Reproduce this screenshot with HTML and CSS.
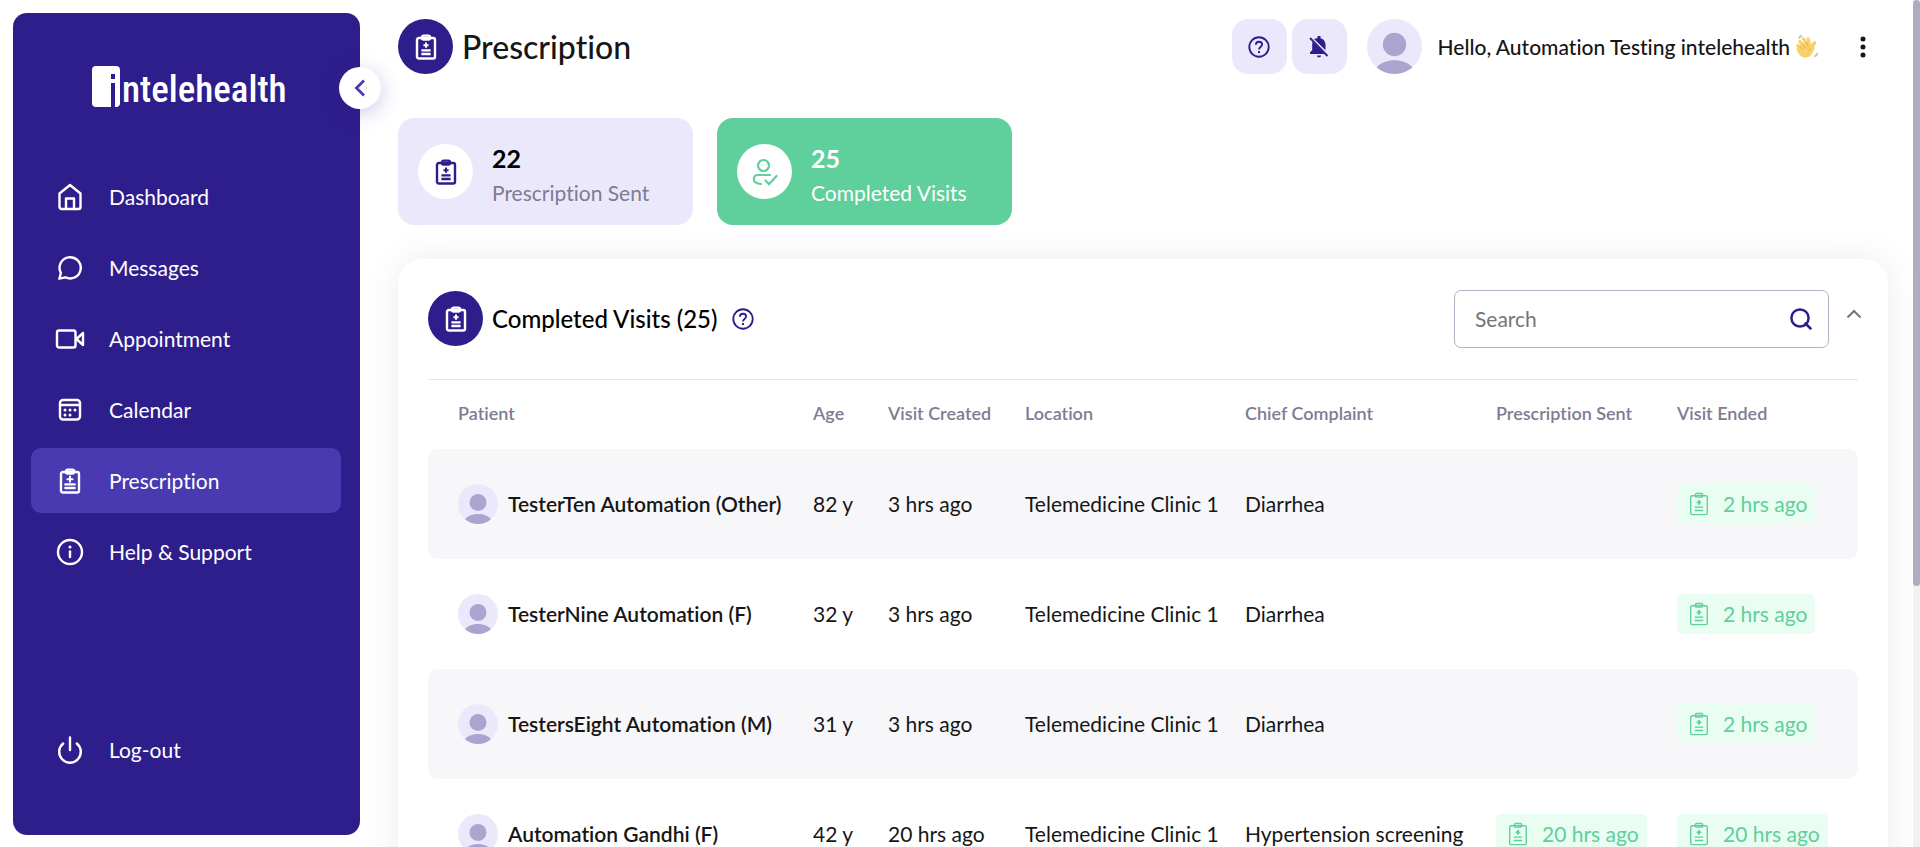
FILE: index.html
```html
<!DOCTYPE html>
<html lang="en">
<head>
<meta charset="utf-8">
<meta name="viewport" content="width=device-width, initial-scale=1">
<title>Prescription - Intelehealth</title>
<link rel="stylesheet" href="styles.css">
</head>
<body>
<svg class="sprite" aria-hidden="true">
  <symbol id="clipboard" viewBox="0 0 24 26">
    <rect x="3" y="4" width="18" height="20.5" rx="1.8" fill="none" stroke="currentColor" stroke-width="var(--sw,2.4)"/>
    <rect class="clip" x="8" y="1.6" width="8" height="4" rx="1.6" stroke="currentColor" stroke-width="var(--sw,2.4)"/>
    <path d="M12 8.6v5.2M9.4 11.2h5.2" stroke="currentColor" stroke-width="2" fill="none"/>
    <path d="M7.4 16.4h9.2M7.4 20h9.2" stroke="currentColor" stroke-width="var(--sw,2.4)" fill="none"/>
  </symbol>
  <symbol id="help" viewBox="0 0 24 24">
    <circle cx="12" cy="12" r="10.6" fill="none" stroke="currentColor" stroke-width="2"/>
    <path d="M8.6 9.6c0-2 1.500-3.300 3.400-3.300s3.400 1.300 3.400 3.100c0 2.500-3.400 2.800-3.400 5.200" fill="none" stroke="currentColor" stroke-width="2"/>
    <rect x="10.9" y="16.4" width="2.200" height="2.200" fill="currentColor"/>
  </symbol>
  <symbol id="person" viewBox="0 0 40 40">
    <circle cx="20" cy="20" r="20" fill="#ece8fc"/>
    <circle cx="20" cy="18.500" r="8.500" fill="#aaa4cf"/>
    <path d="M7 35.200C10 31.500 15 30 20 30s10 1.500 13 5.200A20 20 0 0 1 7 35.200z" fill="#aaa4cf"/>
  </symbol>
</svg>
<div class="app">
  <aside class="sidebar">
    <a class="logo" href="#" aria-label="intelehealth">
      <svg viewBox="0 0 28 41" width="28" height="41" aria-hidden="true"><path fill="#fff" fill-rule="evenodd" d="M4 0h20a4 4 0 0 1 4 4v33a4 4 0 0 1-4 4h-1V17h-4v24H4a4 4 0 0 1-4-4V4a4 4 0 0 1 4-4zm15 8v5h4V8z"/></svg>
      <span>ntelehealth</span>
    </a>
    <button class="collapse" aria-label="Collapse menu"><svg width="12" height="18" viewBox="0 0 12 18"><path d="M10 1.500 2.500 9 10 16.500" fill="none" stroke="#493ab1" stroke-width="2.800"/></svg></button>
    <nav class="nav">
      <a href="#"><svg viewBox="0 0 30 30"><path d="M4.500 11.500 15 3l10.500 8.500V25a2 2 0 0 1-2 2h-17a2 2 0 0 1-2-2zM11 27V16.500h8V27"/></svg><span>Dashboard</span></a>
      <a href="#"><svg viewBox="0 0 30 30"><path d="M4.300 25.700 5.900 20a10.600 10.600 0 1 1 4.500 4.300z"/></svg><span>Messages</span></a>
      <a href="#"><svg viewBox="0 0 30 30"><rect x="2" y="6.500" width="18.500" height="17" rx="2"/><path d="m28 9-6.500 6 6.500 6z"/></svg><span>Appointment</span></a>
      <a href="#"><svg viewBox="0 0 30 30"><rect x="5" y="5" width="20" height="19.500" rx="3"/><path d="M5 10h20"/><path class="dots" d="M10 15h.01M15 15h.01M20 15h.01M10 20h.01M15 20h.01"/></svg><span>Calendar</span></a>
      <a class="active" href="#" aria-current="page"><svg class="rx"><use href="#clipboard"/></svg><span>Prescription</span></a>
      <a href="#"><svg viewBox="0 0 30 30"><circle cx="15" cy="15" r="12"/><path d="M15 14.500v5.500"/><path class="dots" d="M15 10h.01"/></svg><span>Help &amp; Support</span></a>
    </nav>
    <nav class="nav nav-end">
      <a href="#"><svg viewBox="0 0 30 30"><path d="M15 2.500v12.500M8.200 8.500a10.800 10.800 0 1 0 13.600 0"/></svg><span>Log-out</span></a>
    </nav>
  </aside>

  <main class="main">
    <header class="topbar">
      <span class="disc"><svg class="rx"><use href="#clipboard"/></svg></span>
      <h1>Prescription</h1>
      <div class="tools">
        <button class="tool" aria-label="Help"><svg width="22" height="22"><use href="#help"/></svg></button>
        <button class="tool" aria-label="Notifications off"><svg width="20" height="22" viewBox="0 0 20 22"><path fill="currentColor" d="M8.500 0h3v2.200c3 .7 5 3.200 5 6.600v5.500L5 2.900c.9-.4 2-.6 3.500-.7zM3.600 5.800 15.800 18H1v-1.700l2.200-2V8.800c0-1 .1-2.100.4-3zM8 19.500h4a2 2 0 0 1-4 0z"/><path d="m1 2 17.500 18" stroke="currentColor" stroke-width="1.800"/></svg></button>
      </div>
      <svg class="avatar" role="img" aria-label="Profile photo"><use href="#person"/></svg>
      <p class="hello"><span>Hello, Automation Testing intelehealth</span>
        <svg width="24" height="24" viewBox="0 0 24 24" aria-label="waving hand" role="img"><g stroke="#f7d26c" stroke-linecap="round" fill="none"><path stroke-width="3.200" d="M3.800 10.500 8 15M5.800 6.500l5 6.500M9.500 4l4 7.500M14 3.800l1.800 7"/><path stroke-width="3.600" d="M20.500 8c-2 1.500-2 4-2 6"/></g><path fill="#f7d26c" d="m2.500 12.500 12.500-6 4.500 4.500c1 5-1.500 10.500-7 11.500-5 .8-9.500-3.500-10-10z"/><path d="m5.500 11 3.500 4M8 8.500l4 5M11.800 6.500l2.700 5.500M17 14c-1.500 0-2.500 1-3 2.500" stroke="#e3ad45" fill="none"/><path d="M5 3.500C5.500 2 6.500 1 8 1M20.500 21.500c1.500-.5 2.500-1.500 2.500-3.500" stroke="#c3c3ca" stroke-width="2" fill="none"/></svg>
      </p>
      <button class="more" aria-label="More options"><svg width="6" height="22" viewBox="0 0 6 22"><path d="M3 3h.01M3 11h.01M3 19h.01" stroke="#161616" stroke-width="5" stroke-linecap="round"/></svg></button>
    </header>

    <section class="stats">
      <button class="stat">
        <span class="disc light"><svg class="rx"><use href="#clipboard"/></svg></span>
        <span class="stat-text"><b>22</b><span>Prescription Sent</span></span>
      </button>
      <button class="stat selected">
        <span class="disc light"><svg width="26" height="28" viewBox="0 0 26 28" fill="none" stroke="currentColor" stroke-width="2.200" stroke-linecap="round"><circle cx="11.500" cy="7.500" r="5.500"/><path d="M18 17H5.500C3.500 17 2 18.500 2 20.300V22c0 1.800 2.500 3.500 7 4M13.500 22.500l3.500 3.700 7.500-8.200"/></svg></span>
        <span class="stat-text"><b>25</b><span>Completed Visits</span></span>
      </button>
    </section>

    <section class="card">
      <div class="card-head">
        <span class="disc"><svg class="rx"><use href="#clipboard"/></svg></span>
        <h2>Completed Visits (25)</h2>
        <button class="plain" aria-label="About completed visits"><svg width="22" height="22"><use href="#help"/></svg></button>
        <form class="search">
          <input type="search" placeholder="Search" aria-label="Search">
          <button class="plain" type="button" aria-label="Run search"><svg width="22" height="22" viewBox="0 0 22 22" fill="none" stroke="currentColor" stroke-width="2.500"><circle cx="10" cy="10" r="8.600"/><path d="m15.500 15.500 5 5" stroke-linecap="round"/></svg></button>
        </form>
        <button class="plain fold" aria-label="Collapse section"><svg width="16" height="10" viewBox="0 0 16 10"><path d="m1.500 8.500 6.500-6.500 6.500 6.500" fill="none" stroke="currentColor" stroke-width="2"/></svg></button>
      </div>
      <table>
        <colgroup><col class="c-patient"><col class="c-age"><col class="c-created"><col class="c-location"><col class="c-complaint"><col class="c-sent"><col class="c-ended"></colgroup>
        <thead>
          <tr><th>Patient</th><th>Age</th><th>Visit Created</th><th>Location</th><th>Chief Complaint</th><th>Prescription Sent</th><th>Visit Ended</th></tr>
        </thead>
        <tbody>
          <tr><td><span class="patient"><svg><use href="#person"/></svg>TesterTen Automation (Other)</span></td><td>82 y</td><td>3 hrs ago</td><td>Telemedicine Clinic 1</td><td>Diarrhea</td><td></td><td><span class="badge"><svg><use href="#clipboard"/></svg>2 hrs ago</span></td></tr>
          <tr><td><span class="patient"><svg><use href="#person"/></svg>TesterNine Automation (F)</span></td><td>32 y</td><td>3 hrs ago</td><td>Telemedicine Clinic 1</td><td>Diarrhea</td><td></td><td><span class="badge"><svg><use href="#clipboard"/></svg>2 hrs ago</span></td></tr>
          <tr><td><span class="patient"><svg><use href="#person"/></svg>TestersEight Automation (M)</span></td><td>31 y</td><td>3 hrs ago</td><td>Telemedicine Clinic 1</td><td>Diarrhea</td><td></td><td><span class="badge"><svg><use href="#clipboard"/></svg>2 hrs ago</span></td></tr>
          <tr><td><span class="patient"><svg><use href="#person"/></svg>Automation Gandhi (F)</span></td><td>42 y</td><td>20 hrs ago</td><td>Telemedicine Clinic 1</td><td>Hypertension screening</td><td><span class="badge"><svg><use href="#clipboard"/></svg>20 hrs ago</span></td><td><span class="badge"><svg><use href="#clipboard"/></svg>20 hrs ago</span></td></tr>
        </tbody>
      </table>
    </section>
  </main>
</div>
<div class="scrollbar" aria-hidden="true"></div>
</body>
</html>
```
FILE: styles.css
```css
* { box-sizing: border-box; }
:root {
  --indigo: #2e1e8b;
  --lavender: #ece8fc;
  --green: #5fcf9b;
  --grey: #7f7b92;
}
body {
  margin: 0;
  height: 100vh;
  overflow: hidden;
  background: #fff;
  color: #161616;
  font-family: Lato, "Open Sans", sans-serif;
  font-size: 21px;
  line-height: 24px;
  font-variant-ligatures: none;
}
button, input { font: inherit; color: inherit; font-variant-ligatures: none; }
button { border: 0; padding: 0; background: none; cursor: pointer; display: flex; align-items: center; justify-content: center; }
h1, h2, p { margin: 0; }
svg { display: block; flex: none; }
.sprite { position: absolute; width: 0; height: 0; }
.clip { fill: none; }
.rx { width: 26px; height: 26px; }

.app { display: flex; height: 100%; }

/* Sidebar */
.sidebar {
  position: relative;
  flex: none;
  display: flex;
  flex-direction: column;
  width: 347px;
  margin: 13px 0 12px 13px;
  padding: 53px 19px 53px 18px;
  border-radius: 14px;
  background: var(--indigo);
  color: #fff;
}
.logo {
  display: flex;
  align-items: flex-end;
  gap: 2px;
  height: 41px;
  margin-left: 61px;
  color: #fff;
  text-decoration: none;
  font: 500 37px/34px "Roboto Condensed", "Liberation Sans Narrow", "Liberation Sans", sans-serif;
}
.collapse {
  position: absolute;
  top: 54px;
  right: -21px;
  width: 42px;
  height: 42px;
  border-radius: 50%;
  background: #fff;
  box-shadow: 0 4px 20px rgba(46, 30, 145, .25);
}
.nav { display: flex; flex-direction: column; gap: 6px; margin-top: 57px; }
.nav-end { margin-top: auto; }
.nav a {
  display: flex;
  align-items: center;
  gap: 24px;
  height: 65px;
  padding-left: 24px;
  border-radius: 10px;
  color: #fff;
  text-decoration: none;
}
.nav a.active { background: #493ab1; }
.nav svg { width: 30px; height: 30px; fill: none; stroke: #fff; stroke-width: 2.4; stroke-linejoin: round; stroke-linecap: round; }
.nav svg.rx { height: 26px; }
.nav .dots { stroke-width: 3; }

/* Main column */
.main { flex: 1; min-width: 0; padding: 19px 32px 0 38px; }
.topbar { display: flex; align-items: center; height: 55px; }
.disc {
  flex: none;
  display: flex;
  align-items: center;
  justify-content: center;
  width: 55px;
  height: 55px;
  border-radius: 50%;
  background: var(--indigo);
  color: #fff;
}
.disc.light { background: #fff; color: var(--indigo); }
h1 { margin-left: 9px; font-size: 32px; line-height: 40px; font-weight: 500; }
.tools { display: flex; gap: 5px; margin-left: auto; }
.tool { width: 55px; height: 55px; border-radius: 16px; background: var(--lavender); color: var(--indigo); }
.avatar { width: 55px; height: 55px; margin: 0 16px 0 20px; }
.hello { display: flex; align-items: center; gap: 4px; font-weight: 500; }
.more { width: 22px; height: 40px; margin: 0 14px 0 34px; }

.stats { display: flex; gap: 24px; margin-top: 44px; }
.stat {
  justify-content: flex-start;
  gap: 19px;
  width: 295px;
  height: 107px;
  padding: 0 20px;
  border-radius: 16px;
  background: var(--lavender);
  text-align: left;
}
.stat-text { display: flex; flex-direction: column; gap: 9px; padding-top: 5px; color: var(--grey); }
.stat b { color: #000; font-size: 25px; line-height: 28px; }
.stat.selected { background: var(--green); }
.stat.selected .stat-text, .stat.selected b { color: #fff; }
.stat.selected .disc { color: var(--green); }

/* Visits card */
.card {
  margin-top: 34px;
  padding: 30px;
  border-radius: 24px;
  background: #fff;
  box-shadow: 0 0 36px rgba(0, 0, 0, .08);
}
.card-head {
  display: flex;
  align-items: center;
  height: 91px;
  padding-bottom: 31px;
  border-bottom: 1px solid #e6e4ee;
}
h2 { margin: 0 14px 0 9px; font-size: 24px; line-height: 28px; font-weight: 500; color: #000; }
.plain { color: var(--indigo); }
.search {
  display: flex;
  align-items: center;
  width: 375px;
  height: 58px;
  margin-left: auto;
  padding: 0 16px 0 20px;
  border: 1px solid #b5b2c3;
  border-radius: 7px;
}
.search input { flex: 1; min-width: 0; padding: 0; border: 0; outline: 0; background: none; }
.search input::placeholder { color: #757575; opacity: 1; }
.fold { width: 16px; height: 40px; margin: 0 -4px 10px 17px; color: #757575; }

table { width: 100%; table-layout: fixed; border-collapse: separate; border-spacing: 0; }
.c-patient { width: 369px; }
.c-age { width: 75px; }
.c-created { width: 137px; }
.c-location { width: 220px; }
.c-complaint { width: 251px; }
.c-sent { width: 181px; }
.c-ended { width: 197px; }
th, td { padding: 0 0 0 16px; text-align: left; white-space: nowrap; }
th:first-child, td:first-child { padding-left: 30px; }
th { height: 69px; padding-bottom: 4px; color: var(--grey); font-size: 18px; font-weight: 600; }
td { height: 110px; font-weight: 400; }
tbody tr:nth-child(odd) td { background: #f7f7fa; }
td:first-child { border-radius: 10px 0 0 10px; }
td:last-child { border-radius: 0 10px 10px 0; }
.patient { display: flex; align-items: center; gap: 10px; font-weight: 600; }
.patient svg { width: 40px; height: 40px; }
.badge {
  display: inline-flex;
  align-items: center;
  gap: 12px;
  height: 40px;
  padding: 0 8px 0 10px;
  border-radius: 5px;
  background: #e9fdf3;
  color: var(--green);
  vertical-align: middle;
}
.badge svg { width: 24px; height: 24px; --sw: 1.500; }

.scrollbar { position: fixed; inset: 0 0 0 auto; width: 7px; background: #f1f1f1; }
.scrollbar::before { content: ""; display: block; height: 69.200%; border-radius: 4px; background: #afacbd; }
```
